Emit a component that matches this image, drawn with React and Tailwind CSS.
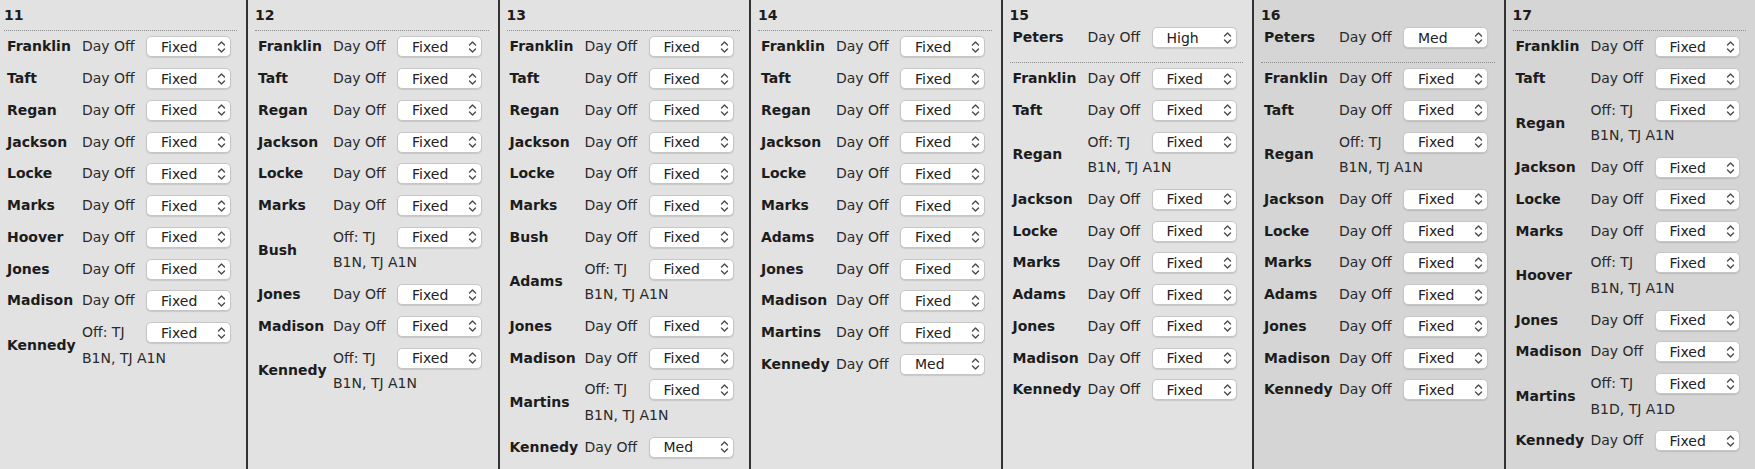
import React from 'react';

const d = (name, sel = 'Fixed') => ({ name, info: 'Day Off', sel });
const o = (name, extra = 'B1N, TJ A1N', sel = 'Fixed') => ({ name, info: 'Off: TJ', sel, extra });

const columns = [
  {
    num: 11,
    top: [],
    rows: [d('Franklin'), d('Taft'), d('Regan'), d('Jackson'), d('Locke'), d('Marks'), d('Hoover'), d('Jones'), d('Madison'), o('Kennedy')],
  },
  {
    num: 12,
    top: [],
    rows: [d('Franklin'), d('Taft'), d('Regan'), d('Jackson'), d('Locke'), d('Marks'), o('Bush'), d('Jones'), d('Madison'), o('Kennedy')],
  },
  {
    num: 13,
    top: [],
    rows: [d('Franklin'), d('Taft'), d('Regan'), d('Jackson'), d('Locke'), d('Marks'), d('Bush'), o('Adams'), d('Jones'), d('Madison'), o('Martins'), d('Kennedy', 'Med')],
  },
  {
    num: 14,
    top: [],
    rows: [d('Franklin'), d('Taft'), d('Regan'), d('Jackson'), d('Locke'), d('Marks'), d('Adams'), d('Jones'), d('Madison'), d('Martins'), d('Kennedy', 'Med')],
  },
  {
    num: 15,
    top: [d('Peters', 'High')],
    rows: [d('Franklin'), d('Taft'), o('Regan'), d('Jackson'), d('Locke'), d('Marks'), d('Adams'), d('Jones'), d('Madison'), d('Kennedy')],
  },
  {
    num: 16,
    dark: true,
    top: [d('Peters', 'Med')],
    rows: [d('Franklin'), d('Taft'), o('Regan'), d('Jackson'), d('Locke'), d('Marks'), d('Adams'), d('Jones'), d('Madison'), d('Kennedy')],
  },
  {
    num: 17,
    dark: true,
    top: [],
    rows: [d('Franklin'), d('Taft'), o('Regan'), d('Jackson'), d('Locke'), d('Marks'), o('Hoover'), d('Jones'), d('Madison'), o('Martins', 'B1D, TJ A1D'), d('Kennedy')],
  },
];

function Chevrons() {
  return (
    <svg width="9" height="14" viewBox="0 0 9 14" fill="none" stroke="#4a4a4a" strokeWidth="1.4" strokeLinecap="round" strokeLinejoin="round">
      <path d="M1.5 5 L4.5 2 L7.5 5" />
      <path d="M1.5 9 L4.5 12 L7.5 9" />
    </svg>
  );
}

function Select({ value }) {
  return (
    <div className="w-[85px] h-[21px] flex items-center justify-between pl-[14px] pr-[4px] bg-white rounded-[5px] border border-[#c6c6c6] shadow-[0_1px_1px_rgba(0,0,0,0.12)] text-[#222]">
      <span className="leading-[18px]">{value}</span>
      <Chevrons />
    </div>
  );
}

function Row({ row }) {
  return (
    <div className="flex pl-[3px]">
      <div className="w-[75px] flex items-center font-bold text-[#1c1c1c]">{row.name}</div>
      <div>
        <div className="flex items-center h-[31.75px]">
          <div className="w-[64px] text-[#2a2a2a]">{row.info}</div>
          <Select value={row.sel} />
        </div>
        {row.extra && <div className="h-[25.5px] leading-[18px] text-[#2a2a2a]">{row.extra}</div>}
      </div>
    </div>
  );
}

function Column({ col, first }) {
  return (
    <div
      className={
        (col.dark ? 'bg-[#d5d5d5] ' : 'bg-[#e2e2e2] ') +
        (first ? 'pl-[4px]' : 'border-l-2 border-[#333] pl-[7px]')
      }
    >
      <div className="h-[22px] pt-[8px] leading-[14px] font-bold text-[#1c1c1c]">{col.num}</div>
      <div className="pb-[8px] mr-[9px] border-b border-dotted border-[#8f8f8f]">
        {col.top.map((r) => (
          <Row key={r.name} row={r} />
        ))}
      </div>
      {col.rows.map((r) => (
        <Row key={r.name} row={r} />
      ))}
    </div>
  );
}

export default function App() {
  return (
    <div
      className="w-[1755px] h-[469px] overflow-hidden grid grid-cols-[246px_repeat(6,1fr)] text-[14px] bg-[#e2e2e2]"
      style={{ fontFamily: '"DejaVu Sans", Verdana, sans-serif' }}
    >
      {columns.map((c, i) => (
        <Column key={c.num} col={c} first={i === 0} />
      ))}
    </div>
  );
}
